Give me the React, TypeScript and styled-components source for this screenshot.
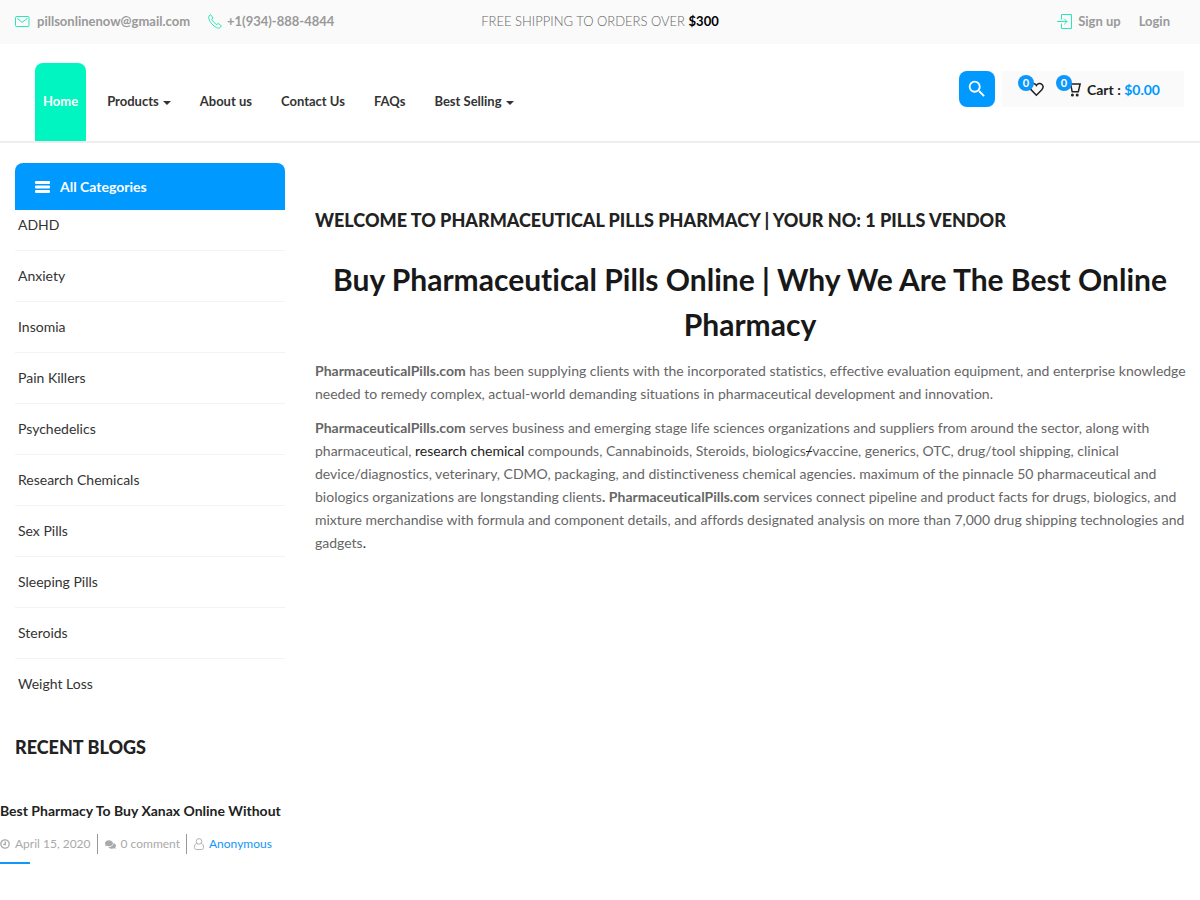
import React from "react";
import styled, { createGlobalStyle, css } from "styled-components";
import { MdSearch } from "react-icons/md";
import { FaComments } from "react-icons/fa";

const GlobalStyle = createGlobalStyle`
  * { box-sizing: border-box; }
  body {
    margin: 0;
    background: #fff;
    color: #666;
    font: 400 14px/23px Lato, "Liberation Sans", sans-serif;
    font-variant-ligatures: none;
  }
  a { color: inherit; text-decoration: none; }
  ul { list-style: none; margin: 0; padding: 0; }
  h1, h2, h3, p { margin: 0; }
  button { font: inherit; border: 0; cursor: pointer; }
`;

const TopBar = styled.div`
  display: grid;
  grid-template-columns: 1fr auto 1fr;
  align-items: center;
  height: 44px;
  padding: 0 15px 1px;
  background: #fafafa;
  color: #999;
  font-size: 13px;
  font-weight: 700;
`;

const TopGroup = styled.div<{ $end?: boolean }>`
  display: flex;
  align-items: center;
  gap: 18px;
  ${(p) => p.$end && css`
    justify-content: flex-end;
    padding-right: 15px;
  `}
`;

const TopLink = styled.a<{ $gap: number }>`
  display: flex;
  align-items: center;
  gap: ${(p) => p.$gap}px;
`;

const Promo = styled.p`
  color: #666;
  font-weight: 300;
  strong { color: #000; font-weight: 700; }
`;

const LineIcon = styled.svg`
  display: block;
  fill: none;
  stroke: #2ce6b8;
  stroke-width: 1;
  stroke-linejoin: round;
  stroke-linecap: round;
`;

const Header = styled.header`
  display: flex;
  justify-content: space-between;
  align-items: flex-start;
  height: 99px;
  padding: 19px 16px 0 35px;
  border-bottom: 2px solid #eee;
`;

const Menu = styled.ul`
  display: flex;
  gap: 13px;
`;

const MenuLink = styled.a<{ $active?: boolean }>`
  display: flex;
  align-items: center;
  gap: 4px;
  height: 78px;
  padding: 0 8px 2px;
  color: #333;
  font-size: 13px;
  font-weight: 700;
  ${(p) => p.$active && css`
    color: #fff;
    background: #00f5c0;
    border-radius: 8px 8px 0 0;
  `}
`;

const Caret = styled.span`
  margin-top: 3px;
  border: 4px solid transparent;
  border-top-color: currentColor;
  border-bottom: 0;
`;

const Actions = styled.div`
  display: flex;
  gap: 7px;
  padding-top: 8px;
`;

const SearchButton = styled.button`
  display: grid;
  place-items: center;
  width: 36px;
  height: 36px;
  padding: 0;
  border-radius: 8px;
  background: #0099ff;
  color: #fff;
`;

const CartPanel = styled.div`
  display: flex;
  align-items: center;
  gap: 22px;
  height: 36px;
  padding: 0 24px 0 26px;
  background: #fafafa;
  color: #222;
  font-weight: 700;
`;

const CartLink = styled.a`
  position: relative;
  display: flex;
  align-items: center;
  gap: 6px;
  height: 24px;
`;

const Count = styled.span`
  position: absolute;
  left: -10px;
  top: -2px;
  width: 16px;
  height: 16px;
  border-radius: 50%;
  background: #0d97fa;
  color: #fff;
  font-size: 11px;
  line-height: 16px;
  text-align: center;
`;

const Price = styled.span`
  color: #0099ff;
`;

const Page = styled.div`
  display: grid;
  grid-template-columns: 270px minmax(0, 1fr);
  gap: 30px;
  padding: 20px 15px;
`;

const CategoryTitle = styled.h2`
  display: flex;
  align-items: center;
  gap: 10px;
  height: 47px;
  padding: 0 20px;
  border-radius: 8px 8px 0 0;
  background: #0099ff;
  color: #fff;
  font-size: 14px;
  font-weight: 700;
`;

const CategoryItem = styled.li`
  padding: 14px 3px;
  border-bottom: 1px solid #f3f3f3;
  line-height: 22px;
  color: #333;
  &:first-child { padding-top: 4px; }
  &:last-child { border-bottom: 0; }
`;

const SectionTitle = styled.h2`
  color: #222;
  font-size: 18px;
  line-height: 24px;
  font-weight: 900;
  text-transform: uppercase;
`;

const Blogs = styled.section`
  margin-top: 26px;
`;

const Post = styled.article`
  margin: 40px 0 0 -15px;
`;

const PostTitle = styled.h3`
  color: #222;
  font-size: 14px;
  line-height: 24px;
  font-weight: 700;
  white-space: nowrap;
`;

const PostMeta = styled.ul`
  display: flex;
  align-items: center;
  margin-top: 11px;
  color: #aaa;
  font-size: 12px;
  line-height: 20px;
  white-space: nowrap;
`;

const MetaItem = styled.li`
  display: flex;
  align-items: center;
  gap: 5px;
  padding-right: 6px;
  & + & {
    padding-left: 7px;
    border-left: 1px solid #999;
  }
  a { color: #1296f7; }
`;

const Accent = styled.div`
  width: 30px;
  height: 2px;
  margin-top: 8px;
  background: #1296f7;
`;

const Main = styled.main`
  padding-top: 45px;
`;

const Headline = styled.h1`
  margin: 25px 0 12px;
  color: #181818;
  font-size: 30px;
  line-height: 45px;
  font-weight: 700;
  text-align: center;
`;

const Paragraph = styled.p`
  margin: 0 -10px 11px 0;
  a { color: #222; }
`;

const categories = [
  "ADHD", "Anxiety", "Insomia", "Pain Killers", "Psychedelics",
  "Research Chemicals", "Sex Pills", "Sleeping Pills", "Steroids", "Weight Loss",
];

const menu = [
  { label: "Home", active: true },
  { label: "Products", caret: true },
  { label: "About us" },
  { label: "Contact Us" },
  { label: "FAQs" },
  { label: "Best Selling", caret: true },
];

export default function App() {
  return (
    <>
      <GlobalStyle />
      <TopBar>
        <TopGroup>
          <TopLink href="#" $gap={7}>
            <LineIcon width="15" height="11" viewBox="0 0 15 11">
              <rect x="0.5" y="0.5" width="13.5" height="10" rx="1" />
              <path d="M2.5 2.7 7.2 6.3 12 2.7" />
            </LineIcon>
            pillsonlinenow@gmail.com
          </TopLink>
          <TopLink href="#" $gap={5}>
            <LineIcon width="14" height="15" viewBox="0 0 14 15">
              <path d="M1.2 1.8 2.6.7 5 4 3.7 5.2C4.8 7.3 6.5 9.4 8.8 10.6L10.2 9.4 13.3 11.8 12.3 13.4C11.5 14.3 10 14.3 8.6 13.6 5 11.8 2 8.5.8 4.6.5 3.4.5 2.5 1.2 1.8Z" />
            </LineIcon>
            +1(934)-888-4844
          </TopLink>
        </TopGroup>
        <Promo>FREE SHIPPING TO ORDERS OVER <strong>$300</strong></Promo>
        <TopGroup $end>
          <TopLink href="#" $gap={6}>
            <LineIcon width="15" height="15" viewBox="0 0 15 15">
              <path d="M4.5 5V.5h10v14h-10V10M0 7.5h10M7.5 5 10 7.5 7.5 10" />
            </LineIcon>
            Sign up
          </TopLink>
          <a href="#">Login</a>
        </TopGroup>
      </TopBar>
      <Header>
        <nav>
          <Menu>
            {menu.map((m) => (
              <li key={m.label}>
                <MenuLink href="#" $active={m.active}>
                  {m.label}
                  {m.caret && <Caret />}
                </MenuLink>
              </li>
            ))}
          </Menu>
        </nav>
        <Actions>
          <SearchButton type="button" aria-label="Search"><MdSearch size={22} /></SearchButton>
          <CartPanel>
            <CartLink href="#" aria-label="Wishlist">
              <svg width="16" height="16" viewBox="0 0 16 16" fill="none" stroke="currentColor" strokeWidth="1.5">
                <path d="M8.4 14.2 3.2 8.9C1.6 7.2 1.4 4.9 2.8 3.5c1.6-1.6 4.3-1.3 5.6 1 1.3-2.3 4-2.6 5.6-1 1.4 1.4 1.2 3.7-.4 5.4Z" />
              </svg>
              <Count>0</Count>
            </CartLink>
            <CartLink href="#">
              <svg width="15" height="15" viewBox="0 0 15 15" fill="none" stroke="currentColor" strokeWidth="1.5">
                <path d="M1.5 2h12.6l-1.8 7.8H6.2L4.6 2" />
                <circle cx="6.4" cy="13" r="1.5" fill="currentColor" stroke="none" />
                <circle cx="11.2" cy="13" r="1.5" fill="currentColor" stroke="none" />
              </svg>
              <Count>0</Count>
              <span>Cart : <Price>$0.00</Price></span>
            </CartLink>
          </CartPanel>
        </Actions>
      </Header>
      <Page>
        <aside>
          <CategoryTitle>
            <svg width="15" height="12" viewBox="0 0 15 12" fill="currentColor">
              <rect width="15" height="3" rx="1" />
              <rect y="4.5" width="15" height="3" rx="1" />
              <rect y="9" width="15" height="3" rx="1" />
            </svg>
            All Categories
          </CategoryTitle>
          <ul>
            {categories.map((c) => (
              <CategoryItem key={c}><a href="#">{c}</a></CategoryItem>
            ))}
          </ul>
          <Blogs>
            <SectionTitle>Recent Blogs</SectionTitle>
            <Post>
              <PostTitle><a href="#">Best Pharmacy To Buy Xanax Online Without</a></PostTitle>
              <PostMeta>
                <MetaItem>
                  <svg width="10" height="10" viewBox="0 0 10 10" fill="none" stroke="currentColor" strokeWidth="1.3">
                    <circle cx="5" cy="5" r="4.2" />
                    <path d="M5.3 2.5v3H3.3" />
                  </svg>
                  April 15, 2020
                </MetaItem>
                <MetaItem>
                  <FaComments size={11} />
                  0 comment
                </MetaItem>
                <MetaItem>
                  <svg width="10" height="12" viewBox="0 0 10 12" fill="none" stroke="currentColor" strokeWidth="0.9">
                    <circle cx="5" cy="3.4" r="2.8" />
                    <path d="M2.8 5.2C1.2 5.6.5 7.4.5 9.4c0 1.4.7 2.1 1.8 2.1h5.4c1.1 0 1.8-.7 1.8-2.1 0-2-.7-3.8-2.3-4.2" />
                  </svg>
                  <a href="#">Anonymous</a>
                </MetaItem>
              </PostMeta>
              <Accent />
            </Post>
          </Blogs>
        </aside>
        <Main>
          <SectionTitle>Welcome to Pharmaceutical Pills Pharmacy | Your No: 1 Pills Vendor</SectionTitle>
          <Headline>Buy Pharmaceutical Pills Online | Why We Are The Best Online Pharmacy</Headline>
          <Paragraph>
            <strong>PharmaceuticalPills.com</strong> has been supplying clients with the incorporated statistics,
            effective evaluation equipment, and enterprise knowledge needed to remedy complex, actual-world demanding
            situations in pharmaceutical development and innovation.
          </Paragraph>
          <Paragraph>
            <strong>PharmaceuticalPills.com</strong> serves business and emerging stage life sciences organizations and
            suppliers from around the sector, along with pharmaceutical, <a href="#">research chemical</a> compounds,
            Cannabinoids, Steroids, biologics<a href="#"><s>/</s></a>vaccine, generics, OTC, drug/tool shipping, clinical
            device/diagnostics, veterinary, CDMO, packaging, and distinctiveness chemical agencies. maximum of the
            pinnacle 50 pharmaceutical and biologics organizations are longstanding clients<b>.</b>{" "}
            <strong>PharmaceuticalPills.com</strong> services connect pipeline and product facts for drugs, biologics,
            and mixture merchandise with formula and component details, and affords designated analysis on more than
            7,000 drug shipping technologies and gadgets<a href="#">.</a>
          </Paragraph>
        </Main>
      </Page>
    </>
  );
}
